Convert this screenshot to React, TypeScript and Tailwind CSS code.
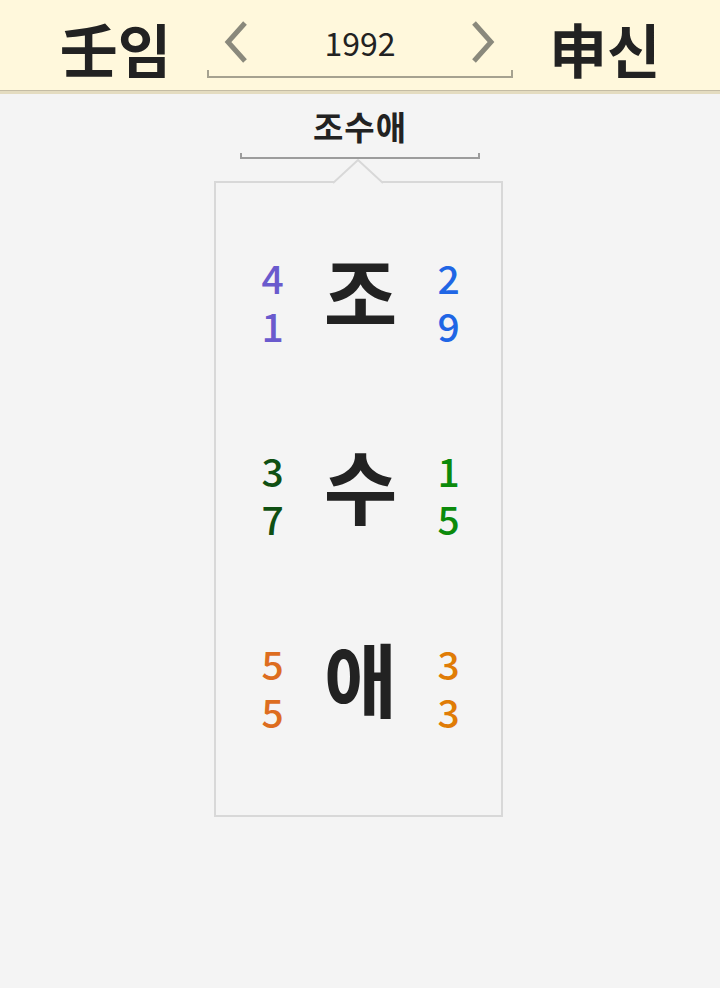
import React from 'react';

const FONT = '"Noto Sans CJK KR", "Noto Sans", sans-serif';

interface Row {
  char: string;
  left: [string, string];
  right: [string, string];
  leftColor: string;
  rightColor: string;
}

const ROWS: Row[] = [
  { char: '조', left: ['4', '1'], right: ['2', '9'], leftColor: 'text-[#6a5acd]', rightColor: 'text-[#1f66e5]' },
  { char: '수', left: ['3', '7'], right: ['1', '5'], leftColor: 'text-[#0f4f12]', rightColor: 'text-[#0b8a0b]' },
  { char: '애', left: ['5', '5'], right: ['3', '3'], leftColor: 'text-[#dd6d1f]', rightColor: 'text-[#e07c06]' },
];

function Chevron({ dir }: { dir: 'left' | 'right' }) {
  return (
    <svg width="26" height="44" viewBox="0 0 26 44" className="block">
      <polyline
        points={dir === 'left' ? '22,3 5,22 22,41' : '4,3 21,22 4,41'}
        fill="none"
        stroke="#8a897c"
        strokeWidth="5"
      />
    </svg>
  );
}

function NumCol({ nums, color }: { nums: [string, string]; color: string }) {
  return (
    <div className={`w-[50px] flex flex-col items-center text-[39px] font-medium leading-[48px] ${color}`}>
      <span className="block h-[48px]">{nums[0]}</span>
      <span className="block h-[48px]">{nums[1]}</span>
    </div>
  );
}

export default function App() {
  return (
    <div className="min-h-[988px] bg-[#f4f4f4] text-[#222]" style={{ fontFamily: FONT }}>
      {/* header */}
      <div className="bg-[#fff8dc] border-b-[3px] border-[#e4dcc0]">
        <div className="h-[91px] pt-[5px] flex items-center justify-center gap-[36px] border-b border-[#c4bca4]">
          <span className="text-[58px] font-bold leading-none">壬임</span>
          <div className="relative w-[306px] h-[60px] mt-[8px]">
            <div className="absolute left-[16px] top-[-2px]"><Chevron dir="left" /></div>
            <div className="absolute right-[17px] top-[-2px]"><Chevron dir="right" /></div>
            <div className="text-center text-[32px] leading-[40px]">1992</div>
            <div className="absolute left-0 right-0 bottom-[4px] h-[8px] border-x-2 border-b-2 border-[#a6a290]" />
          </div>
          <span className="text-[58px] font-bold leading-none">申신</span>
        </div>
      </div>

      {/* name */}
      <div className="flex flex-col items-center">
        <div className="mt-[12px] text-[33px] font-bold leading-[40px] tracking-[1px]">조수애</div>
        <div className="mt-[7px] w-[240px] h-[6px] border-x-2 border-b-2 border-[#9c9c9c]" />
      </div>

      {/* card */}
      <div className="flex justify-center mt-[22px] pr-[3px]">
        <div className="relative w-[289px] h-[636px] border-2 border-[#d8d8d8] pt-[21px]">
          <svg
            width="50"
            height="26"
            viewBox="0 0 50 26"
            className="absolute top-[-24px] left-[117px]"
          >
            <polygon points="0,24 25,1 50,24 50,26 0,26" fill="#f4f4f4" />
            <polyline points="0,24 25,1 50,24" fill="none" stroke="#d8d8d8" strokeWidth="2" />
          </svg>
          {ROWS.map((r) => (
            <div key={r.char} className="h-[193px] flex items-center justify-center pl-[4px]">
              <NumCol nums={r.left} color={r.leftColor} />
              <div className="w-[126px] text-center text-[80px] font-bold leading-none -mt-[22px]">{r.char}</div>
              <NumCol nums={r.right} color={r.rightColor} />
            </div>
          ))}
        </div>
      </div>
    </div>
  );
}
